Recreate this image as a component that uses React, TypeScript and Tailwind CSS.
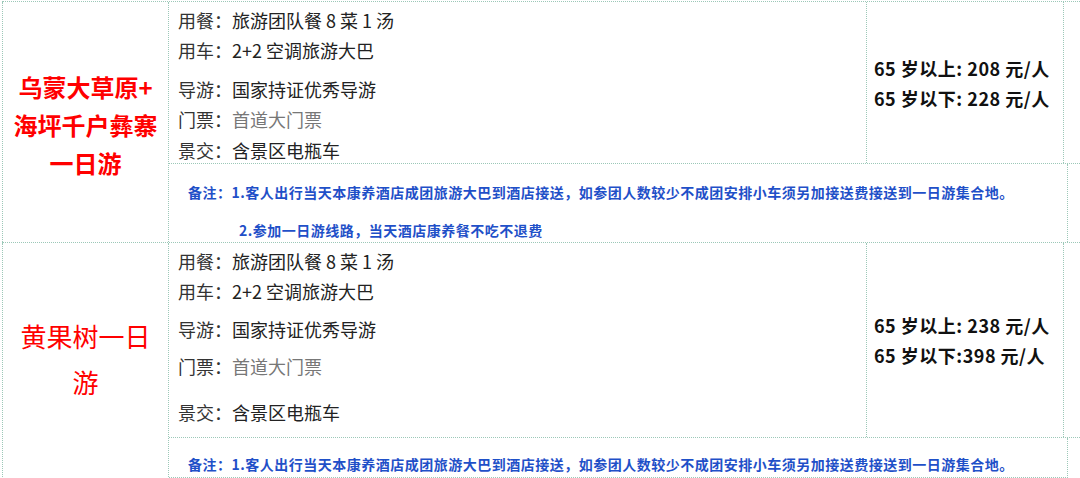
const SANS = "font-['Noto_Sans_CJK_SC','Noto_Sans',sans-serif]"

type Line = { label: string; value: string; muted?: boolean; mt: string }

function InfoLines({ lines }: { lines: Line[] }) {
  return (
    <div className="flex flex-col pl-[9px] pt-[3px] text-[18px] leading-[30px]">
      {lines.map((l) => (
        <div key={l.label} className={`${l.mt} whitespace-nowrap`}>
          <span className="text-[#333]">{l.label}：</span>
          <span className={l.muted ? 'text-[#777]' : 'text-[#222]'}>{l.value}</span>
        </div>
      ))}
    </div>
  )
}

function Prices({ a, b }: { a: string; b: string }) {
  return (
    <div className="flex flex-col justify-center pl-[7px] text-[18px] font-bold leading-[30px] tracking-[0.5px] text-[#111] whitespace-nowrap">
      <div>{a}</div>
      <div>{b}</div>
    </div>
  )
}

const NOTE1 = '备注：1.客人出行当天本康养酒店成团旅游大巴到酒店接送，如参团人数较少不成团安排小车须另加接送费接送到一日游集合地。'
const NOTE2 = '2.参加一日游线路，当天酒店康养餐不吃不退费'

export default function App() {
  const line = 'border-dotted border-[#9cc8b8]'
  const note = 'text-[14px] font-bold leading-[22px] tracking-[0.5px] text-[#1f50c8] whitespace-nowrap'
  return (
    <div className={`w-[1080px] h-[478px] overflow-hidden bg-white pt-[1px] pl-[2px] ${SANS}`}>
      <div className={`border-t ${line}`}>
        {/* 乌蒙大草原 */}
        <div className={`flex h-[241px] border-b ${line}`}>
          <div className={`w-[167px] shrink-0 border-l border-r ${line} flex flex-col items-center justify-center pt-[6px] text-[24px] font-bold leading-[38px] text-[#ff0000]`}>
            <div>乌蒙大草原+</div>
            <div>海坪千户彝寨</div>
            <div>一日游</div>
          </div>
          <div className="flex flex-1 flex-col">
            <div className={`flex h-[162px] border-b ${line}`}>
              <div className={`w-[698px] shrink-0 border-r ${line}`}>
                <InfoLines
                  lines={[
                    { label: '用餐', value: '旅游团队餐 8 菜 1 汤', mt: 'mt-0' },
                    { label: '用车', value: '2+2 空调旅游大巴', mt: 'mt-0' },
                    { label: '导游', value: '国家持证优秀导游', mt: 'mt-[9px]' },
                    { label: '门票', value: '首道大门票', muted: true, mt: 'mt-0' },
                    { label: '景交', value: '含景区电瓶车', mt: 'mt-[1px]' },
                  ]}
                />
              </div>
              <div className={`w-[197px] shrink-0 border-r ${line} flex`}>
                <Prices a="65 岁以上: 208 元/人" b="65 岁以下: 228 元/人" />
              </div>
              <div className="flex-1" />
            </div>
            <div className="flex flex-1">
              <div className={`w-[899px] shrink-0 border-r ${line} pt-[17px] ${note}`}>
                <div className="pl-[19px]">{NOTE1}</div>
                <div className="pl-[70px] mt-[16px]">{NOTE2}</div>
              </div>
              <div className="flex-1" />
            </div>
          </div>
        </div>

        {/* 黄果树 */}
        <div className="flex h-[300px]">
          <div className={`w-[167px] shrink-0 border-l border-r ${line} h-[236px] flex flex-col items-center justify-center pb-[4px] text-[26px] leading-[46px] text-[#ff0000]`}>
            <div>黄果树一日</div>
            <div>游</div>
          </div>
          <div className="flex flex-1 flex-col">
            <div className={`flex h-[195px] shrink-0 border-b ${line}`}>
              <div className={`w-[698px] shrink-0 border-r ${line}`}>
                <InfoLines
                  lines={[
                    { label: '用餐', value: '旅游团队餐 8 菜 1 汤', mt: 'mt-0' },
                    { label: '用车', value: '2+2 空调旅游大巴', mt: 'mt-0' },
                    { label: '导游', value: '国家持证优秀导游', mt: 'mt-[8px]' },
                    { label: '门票', value: '首道大门票', muted: true, mt: 'mt-[7px]' },
                    { label: '景交', value: '含景区电瓶车', mt: 'mt-[16px]' },
                  ]}
                />
              </div>
              <div className={`w-[197px] shrink-0 border-r ${line} flex`}>
                <Prices a="65 岁以上: 238 元/人" b="65 岁以下:398 元/人" />
              </div>
              <div className="flex-1" />
            </div>
            <div className="flex h-[40px]">
              <div className={`w-[899px] shrink-0 border-r border-b ${line} pt-[15px] ${note}`}>
                <div className="pl-[19px]">{NOTE1}</div>
              </div>
              <div className="flex-1" />
            </div>
          </div>
        </div>
      </div>
    </div>
  )
}
